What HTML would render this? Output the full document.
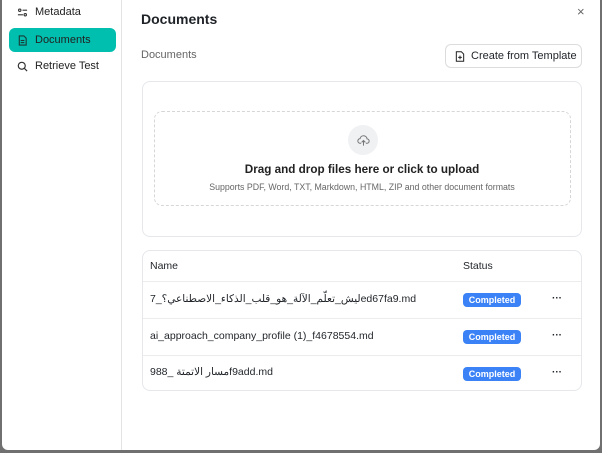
<!DOCTYPE html>
<html><head><meta charset="utf-8"><style>
*{box-sizing:border-box;margin:0;padding:0}
body{width:602px;height:453px;background:#707070;font-family:"Liberation Sans","Noto Sans CJK SC",sans-serif;position:relative;overflow:hidden;color:#1f2328}
.win{position:absolute;left:2px;top:0;width:598px;height:450px;background:#fff;border-radius:0 0 6px 6px;overflow:hidden}
.side{position:absolute;left:0;top:0;width:120px;height:450px;border-right:1px solid #e3e3e3}
.it{position:absolute;left:7px;width:107px;height:24px;font-size:11px;display:flex;align-items:center;padding-left:8px;gap:7px;color:#222;border-radius:6px}
.act{background:#00bfae}
.abs{position:absolute}
.card{position:absolute;left:140px;width:440px;border:1px solid #e5e7eb;border-radius:8px;background:#fff}
.row{position:absolute;left:0;width:438px;border-top:1px solid #ececec;font-size:10.5px}
.badge{position:absolute;left:320px;width:58px;height:14px;background:#3b82f6;color:#fff;font-size:9px;font-weight:bold;border-radius:4px;text-align:center;line-height:14px}
.dots{position:absolute;left:409px;font-size:10px;font-weight:bold}
</style></head><body>
<div class="win">
<div class="side">
<div class="it" style="top:0">
<svg width="11" height="11" viewBox="0 0 12 12" fill="none" stroke="#333" stroke-width="1.2"><circle cx="3" cy="3.5" r="1.3"/><line x1="6" y1="3.5" x2="11" y2="3.5"/><circle cx="9" cy="8.5" r="1.3"/><line x1="1" y1="8.5" x2="6.5" y2="8.5"/></svg>Metadata</div>
<div class="it act" style="top:28px">
<svg width="11" height="11" viewBox="0 0 12 12" fill="none" stroke="#1a3a36" stroke-width="1.2"><path d="M2.5 1h5l2.5 2.5V11h-7.5z"/><line x1="4" y1="6" x2="8" y2="6"/><line x1="4" y1="8.3" x2="8" y2="8.3"/></svg>Documents</div>
<div class="it" style="top:54px">
<svg width="11" height="11" viewBox="0 0 12 12" fill="none" stroke="#333" stroke-width="1.3"><circle cx="5.2" cy="5.2" r="3.8"/><line x1="8" y1="8" x2="11" y2="11"/></svg>Retrieve Test</div>
</div>
<div class="abs" style="left:139px;top:11px;font-size:14px;font-weight:bold">Documents</div>
<div class="abs" style="left:575px;top:4px;font-size:13px;color:#666">×</div>
<div class="abs" style="left:139px;top:49px;font-size:11px;color:#666">Documents</div>
<div class="abs" style="left:443px;top:44px;width:137px;height:24px;border:1px solid #dcdcdc;border-radius:6px;font-size:11px;display:flex;align-items:center;padding-left:9px;gap:6px">
<svg width="10" height="11" viewBox="0 0 10 12" fill="none" stroke="#222" stroke-width="1.1"><path d="M1 .8h5.5L9 3.3V11.2H1z"/><path d="M5 5v4M3 7h4"/></svg>Create from Template</div>
<div class="card" style="top:81px;height:156px">
<div class="abs" style="left:11px;top:29px;width:417px;height:95px;border:1px dashed #d6d6d6;border-radius:8px"></div>
<div class="abs" style="left:205px;top:43px;width:30px;height:30px;border-radius:50%;background:#f0f1f3;display:flex;align-items:center;justify-content:center">
<svg width="13" height="13" viewBox="0 0 14 14" fill="none" stroke="#777" stroke-width="1.1"><path d="M4.5 10H3.5A2.5 2.5 0 0 1 3.3 5 3.8 3.8 0 0 1 10.8 5.2 2.4 2.4 0 0 1 10.5 10H9.5"/><path d="M7 12.5V7M5 9l2-2 2 2"/></svg></div>
<div class="abs" style="left:0;width:438px;top:81px;text-align:center;font-size:11.7px;font-weight:bold;color:#222">Drag and drop files here or click to upload</div>
<div class="abs" style="left:0;width:438px;top:100px;text-align:center;font-size:8.8px;color:#666">Supports PDF, Word, TXT, Markdown, HTML, ZIP and other document formats</div>
</div>
<div class="card" style="top:250px;height:141px">
<div class="abs" style="left:7px;top:9px;font-size:10.5px">Name</div>
<div class="abs" style="left:320px;top:9px;font-size:10.5px">Status</div>
<div class="row" style="top:30px;height:37px"><div class="abs" style="left:7px;top:11px">ليش_تعلّم_الآلة_هو_قلب_الذكاء_الاصطناعي؟_7ed67fa9.md</div><div class="badge" style="top:11px">Completed</div><div class="dots" style="top:11px">···</div></div>
<div class="row" style="top:67px;height:37px"><div class="abs" style="left:7px;top:11px">ai_approach_company_profile (1)_f4678554.md</div><div class="badge" style="top:11px">Completed</div><div class="dots" style="top:11px">···</div></div>
<div class="row" style="top:104px;height:36px"><div class="abs" style="left:7px;top:10px">مسار الاتمتة _988f9add.md</div><div class="badge" style="top:11px">Completed</div><div class="dots" style="top:11px">···</div></div>
</div>
</div>
</body></html>
